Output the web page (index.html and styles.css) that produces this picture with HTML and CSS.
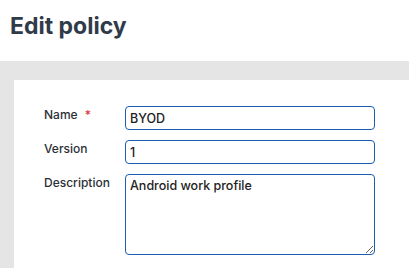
FILE: index.html
```html
<!DOCTYPE html>
<html>
<head>
<meta charset="utf-8">
<link rel="stylesheet" href="styles.css">
</head>
<body>
<header class="page-header">
  <h1 class="title">Edit policy</h1>
</header>
<main class="page-body">
  <section class="card">
    <form class="form">
      <label class="label" for="name">Name <span class="req">*</span></label>
      <input class="field" id="name" type="text" value="BYOD">
      <label class="label" for="version">Version</label>
      <input class="field" id="version" type="text" value="1">
      <label class="label" for="desc">Description</label>
      <textarea class="field area" id="desc">Android work profile</textarea>
    </form>
  </section>
</main>
</body>
</html>
```
FILE: styles.css
```css
html, body {
  margin: 0;
  padding: 0;
  height: 100%;
  overflow: hidden;
  background: #ffffff;
  font-family: Inter, "Liberation Sans", sans-serif;
}
.page-header {
  height: 61px;
  box-sizing: border-box;
  padding: 11px 0 0 10px;
}
.title {
  margin: 0;
  font-size: 23px;
  line-height: 30px;
  font-weight: 700;
  color: #2f3b48;
}
.page-body {
  background: #e5e5e5;
  height: calc(100% - 61px);
  padding: 19px 0 0 14px;
  box-sizing: border-box;
}
.card {
  background: #ffffff;
  height: 100%;
  box-sizing: border-box;
  padding: 26px 0 0 30px;
}
.form {
  display: grid;
  grid-template-columns: 81px 250px;
  row-gap: 10px;
}
.label {
  font-size: 12px;
  line-height: 15px;
  font-weight: 500;
  color: #2b2f36;
  padding-top: 1px;
}
.req {
  color: #d9363e;
  margin-left: 4px;
}
.field {
  box-sizing: border-box;
  width: 250px;
  height: 24px;
  border: 1.5px solid #1a5cae;
  border-radius: 4px;
  padding: 2px 4px;
  font-family: Inter, "Liberation Sans", sans-serif;
  font-size: 12.5px;
  font-weight: 500;
  color: #222222;
  outline: none;
  margin: 0;
}
.area {
  height: 81px;
  resize: vertical;
  padding-top: 3px;
}
```
